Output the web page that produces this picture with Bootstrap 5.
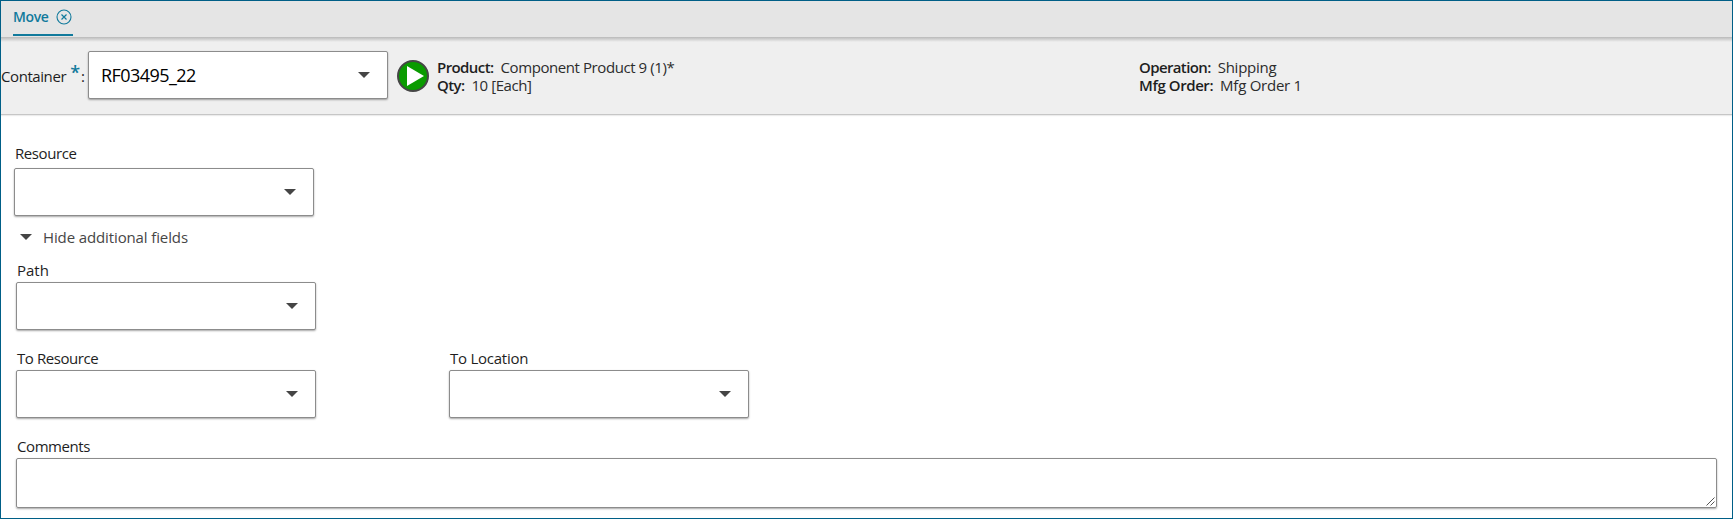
<!DOCTYPE html>
<html lang="en">
<head>
<meta charset="utf-8">
<title>Move</title>
<link rel="stylesheet" href="https://cdn.jsdelivr.net/npm/bootstrap@5.3.0/dist/css/bootstrap.min.css">
<style>
body { font-family: "Open Sans", "Noto Sans", sans-serif; font-size: 15px; line-height: 18px; color: #1e1e1e; }
.frame { height: 519px; border: 1px solid #005f87; overflow: hidden; background: #fff; }
.tabbar { height: 36px; background: #e5e5e5; padding-left: 12px; }
.tab-item { width: 60px; height: 35px; border-bottom: 2px solid #117a9c; color: #117a9c; font-weight: 600; font-size: 14px; padding: 0 1px 2px 0; letter-spacing: -.35px; }
.band { height: 78px; padding-bottom: 1px; background: linear-gradient(#b9b9b9, #cfcfcf 2px, #efefef 5px); border-bottom: 1px solid #c6c6c6; box-shadow: 0 1px 1px #ececec; }
.band-name { width: 87px; padding-top: 2px; }
.picker { width: 300px; height: 48px; border: 1px solid #8c8c8c; border-radius: 2px; background: #fff; box-shadow: 0 1px 2px rgba(0,0,0,.35); padding: 0 17px 0 12px; }
.picker .value { font-size: 18px; color: #000; letter-spacing: -.55px; }
.lbl { font-weight: 500; }
.form-area .lbl { padding-left: 1px; }
.info { color: #2c2c2c; padding-top: 2px; }
.info b { font-weight: 600; color: #1e1e1e; }
.info b + span { margin-left: 7px; }
.req { color: #117a9c; font-size: 18px; font-weight: 600; margin: -9px 1px 0 4px; }
.play { margin: 1px 0 0 9px; }
.info-a { margin-left: 8px; width: 702px; }
.toggler { color: #464646; font-weight: 500; margin: 12px 0 0 6px; gap: 11px; }
.comments { height: 50px; border: 1px solid #8c8c8c; border-radius: 2px; box-shadow: 0 1px 2px rgba(0,0,0,.35); padding: 1px; }
.form-area { padding: 29px 15px 0 13px; }
.extra { margin-left: 2px; padding-top: 15px; }
.stack { margin-bottom: 19px; }
.gap-label { gap: 3px; }
.gap-label-lg { gap: 6px; }
.cols { gap: 133px; }
.t2 { letter-spacing: -.25px; }
.t1 { letter-spacing: -.12px; }
.t4 { letter-spacing: -.42px; }
.t6 { letter-spacing: -.58px; }
.t8 { letter-spacing: -.62px; }
</style>
<script src="https://cdn.jsdelivr.net/npm/bootstrap@5.3.0/dist/js/bootstrap.bundle.min.js"></script>
</head>
<body>
<svg class="d-none"><symbol id="caret" viewBox="0 0 12 6"><path d="M0 0h12L6 6z" fill="#454545"/></symbol></svg>
<div class="frame d-flex flex-column">
  <div class="tabbar flex-shrink-0">
    <div class="tab-item d-flex align-items-center justify-content-between">
      <span>Move</span>
      <svg width="16" height="16" viewBox="0 0 16 16" fill="none" stroke="#117a9c"><circle cx="8" cy="8" r="7" stroke-width="1.1"/><path d="M5.5 5.5l5 5M10.5 5.5l-5 5" stroke-width="1.2"/></svg>
    </div>
  </div>
  <div class="band flex-shrink-0 d-flex align-items-center">
    <div class="band-name d-flex align-items-center">
      <span class="lbl t4">Container</span><span class="req">*</span><span class="lbl">:</span>
    </div>
    <div class="picker d-flex align-items-center justify-content-between">
      <span class="value">RF03495_22</span>
      <svg width="12" height="6"><use href="#caret"/></svg>
    </div>
    <svg class="play" width="32" height="32" viewBox="0 0 32 32"><circle cx="16" cy="16" r="15" fill="#0a9b00" stroke="#464646" stroke-width="2"/><path d="M10 6v20l17-10z" fill="#fff"/></svg>
    <div class="info info-a">
      <div><b class="t6">Product:</b><span class="t4">Component Product 9 (1)*</span></div>
      <div><b class="t8">Qty:</b><span class="t4">10 [Each]</span></div>
    </div>
    <div class="info">
      <div><b class="t8">Operation:</b><span class="t2">Shipping</span></div>
      <div><b class="t4">Mfg Order:</b><span class="t2">Mfg Order 1</span></div>
    </div>
  </div>
  <div class="form-area">
    <div class="d-flex flex-column gap-label-lg">
      <span class="lbl t4">Resource</span>
      <div class="picker d-flex align-items-center justify-content-end"><svg width="12" height="6"><use href="#caret"/></svg></div>
    </div>
    <div class="toggler d-flex align-items-center"><svg width="12" height="6"><use href="#caret"/></svg><span class="t1">Hide additional fields</span></div>
    <div class="extra">
      <div class="stack d-flex flex-column gap-label">
        <span class="lbl">Path</span>
        <div class="picker d-flex align-items-center justify-content-end"><svg width="12" height="6"><use href="#caret"/></svg></div>
      </div>
      <div class="stack d-flex cols">
        <div class="d-flex flex-column gap-label">
          <span class="lbl t4">To Resource</span>
          <div class="picker d-flex align-items-center justify-content-end"><svg width="12" height="6"><use href="#caret"/></svg></div>
        </div>
        <div class="d-flex flex-column gap-label">
          <span class="lbl t2">To Location</span>
          <div class="picker d-flex align-items-center justify-content-end"><svg width="12" height="6"><use href="#caret"/></svg></div>
        </div>
      </div>
      <div class="d-flex flex-column gap-label">
        <span class="lbl t4">Comments</span>
        <div class="comments d-flex align-items-end justify-content-end">
          <svg width="9" height="9" viewBox="0 0 9 9" stroke="#555" stroke-width="1"><path d="M.5 8.5l8-8M4.5 8.5l4-4"/></svg>
        </div>
      </div>
    </div>
  </div>
</div>
</body>
</html>
